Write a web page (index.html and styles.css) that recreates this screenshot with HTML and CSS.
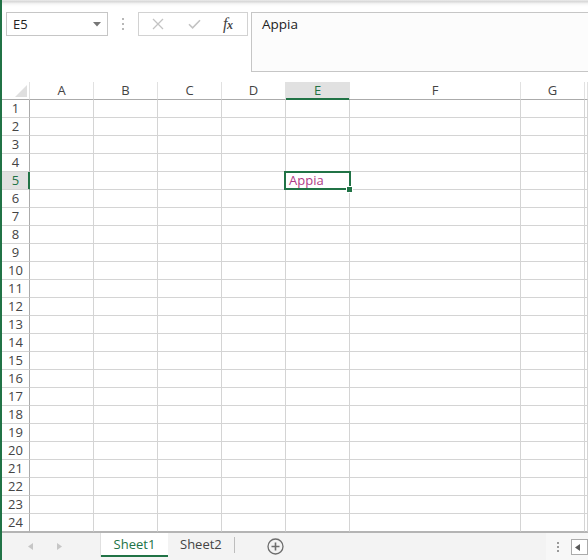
FILE: index.html
```html
<!DOCTYPE html>
<html>
<head>
<meta charset="utf-8">
<link rel="stylesheet" href="styles.css">
</head>
<body>
<div class="app">
  <div class="toolbar">
    <div class="namebox">
      <span class="nb-text">E5</span>
      <svg class="caret" width="8" height="5" viewBox="0 0 8 5"><path d="M0 0H8L4 4.5Z" fill="#767676"/></svg>
    </div>
    <div class="vdots"><i></i><i></i><i></i></div>
    <div class="fxbox">
      <svg class="ic-x" width="12" height="12" viewBox="0 0 12 12"><path d="M1 1L11 11M11 1L1 11" stroke="#c3c3c3" stroke-width="1.3" fill="none"/></svg>
      <svg class="ic-ok" width="13" height="10" viewBox="0 0 13 10"><path d="M1 5.2L4.6 8.8L12 1.2" stroke="#c3c3c3" stroke-width="1.6" fill="none"/></svg>
      <span class="fx">f<span class="fx-x">x</span></span>
    </div>
    <div class="formula">Appia</div>
  </div>

  <div class="sheet">
    <div class="row hdr">
      <div class="corner"><svg width="12" height="12" viewBox="0 0 12 12"><path d="M12 0V12H0Z" fill="#dfdfdf"/></svg></div>
      <div class="ch">A</div><div class="ch">B</div><div class="ch">C</div><div class="ch">D</div><div class="ch sel">E</div><div class="ch">F</div><div class="ch">G</div><div class="ch"></div>
    </div>
    <div class="row"><div class="rh">1</div><div class="c"></div><div class="c"></div><div class="c"></div><div class="c"></div><div class="c"></div><div class="c"></div><div class="c"></div><div class="c"></div></div>
    <div class="row"><div class="rh">2</div><div class="c"></div><div class="c"></div><div class="c"></div><div class="c"></div><div class="c"></div><div class="c"></div><div class="c"></div><div class="c"></div></div>
    <div class="row"><div class="rh">3</div><div class="c"></div><div class="c"></div><div class="c"></div><div class="c"></div><div class="c"></div><div class="c"></div><div class="c"></div><div class="c"></div></div>
    <div class="row"><div class="rh">4</div><div class="c"></div><div class="c"></div><div class="c"></div><div class="c"></div><div class="c"></div><div class="c"></div><div class="c"></div><div class="c"></div></div>
    <div class="row"><div class="rh sel">5</div><div class="c"></div><div class="c"></div><div class="c"></div><div class="c"></div><div class="c val">Appia</div><div class="c"></div><div class="c"></div><div class="c"></div></div>
    <div class="row"><div class="rh">6</div><div class="c"></div><div class="c"></div><div class="c"></div><div class="c"></div><div class="c"></div><div class="c"></div><div class="c"></div><div class="c"></div></div>
    <div class="row"><div class="rh">7</div><div class="c"></div><div class="c"></div><div class="c"></div><div class="c"></div><div class="c"></div><div class="c"></div><div class="c"></div><div class="c"></div></div>
    <div class="row"><div class="rh">8</div><div class="c"></div><div class="c"></div><div class="c"></div><div class="c"></div><div class="c"></div><div class="c"></div><div class="c"></div><div class="c"></div></div>
    <div class="row"><div class="rh">9</div><div class="c"></div><div class="c"></div><div class="c"></div><div class="c"></div><div class="c"></div><div class="c"></div><div class="c"></div><div class="c"></div></div>
    <div class="row"><div class="rh">10</div><div class="c"></div><div class="c"></div><div class="c"></div><div class="c"></div><div class="c"></div><div class="c"></div><div class="c"></div><div class="c"></div></div>
    <div class="row"><div class="rh">11</div><div class="c"></div><div class="c"></div><div class="c"></div><div class="c"></div><div class="c"></div><div class="c"></div><div class="c"></div><div class="c"></div></div>
    <div class="row"><div class="rh">12</div><div class="c"></div><div class="c"></div><div class="c"></div><div class="c"></div><div class="c"></div><div class="c"></div><div class="c"></div><div class="c"></div></div>
    <div class="row"><div class="rh">13</div><div class="c"></div><div class="c"></div><div class="c"></div><div class="c"></div><div class="c"></div><div class="c"></div><div class="c"></div><div class="c"></div></div>
    <div class="row"><div class="rh">14</div><div class="c"></div><div class="c"></div><div class="c"></div><div class="c"></div><div class="c"></div><div class="c"></div><div class="c"></div><div class="c"></div></div>
    <div class="row"><div class="rh">15</div><div class="c"></div><div class="c"></div><div class="c"></div><div class="c"></div><div class="c"></div><div class="c"></div><div class="c"></div><div class="c"></div></div>
    <div class="row"><div class="rh">16</div><div class="c"></div><div class="c"></div><div class="c"></div><div class="c"></div><div class="c"></div><div class="c"></div><div class="c"></div><div class="c"></div></div>
    <div class="row"><div class="rh">17</div><div class="c"></div><div class="c"></div><div class="c"></div><div class="c"></div><div class="c"></div><div class="c"></div><div class="c"></div><div class="c"></div></div>
    <div class="row"><div class="rh">18</div><div class="c"></div><div class="c"></div><div class="c"></div><div class="c"></div><div class="c"></div><div class="c"></div><div class="c"></div><div class="c"></div></div>
    <div class="row"><div class="rh">19</div><div class="c"></div><div class="c"></div><div class="c"></div><div class="c"></div><div class="c"></div><div class="c"></div><div class="c"></div><div class="c"></div></div>
    <div class="row"><div class="rh">20</div><div class="c"></div><div class="c"></div><div class="c"></div><div class="c"></div><div class="c"></div><div class="c"></div><div class="c"></div><div class="c"></div></div>
    <div class="row"><div class="rh">21</div><div class="c"></div><div class="c"></div><div class="c"></div><div class="c"></div><div class="c"></div><div class="c"></div><div class="c"></div><div class="c"></div></div>
    <div class="row"><div class="rh">22</div><div class="c"></div><div class="c"></div><div class="c"></div><div class="c"></div><div class="c"></div><div class="c"></div><div class="c"></div><div class="c"></div></div>
    <div class="row"><div class="rh">23</div><div class="c"></div><div class="c"></div><div class="c"></div><div class="c"></div><div class="c"></div><div class="c"></div><div class="c"></div><div class="c"></div></div>
    <div class="row last"><div class="rh">24</div><div class="c"></div><div class="c"></div><div class="c"></div><div class="c"></div><div class="c"></div><div class="c"></div><div class="c"></div><div class="c"></div></div>
    <div class="selbox"><span class="handle"></span></div>
  </div>

  <div class="tabbar">
    <div class="nav">
      <svg width="5" height="7" viewBox="0 0 5 7"><path d="M5 0V7L0 3.5Z" fill="#c6c6c6"/></svg>
      <svg width="5" height="7" viewBox="0 0 5 7"><path d="M0 0V7L5 3.5Z" fill="#c6c6c6"/></svg>
    </div>
    <div class="tab active">Sheet1</div>
    <div class="tab">Sheet2</div>
    <div class="tabsep"></div>
    <div class="addsheet">
      <svg width="17" height="17" viewBox="0 0 17 17"><circle cx="8.5" cy="8.5" r="7.5" stroke="#6d6d6d" stroke-width="1.3" fill="none"/><path d="M8.5 4.5V12.5M4.5 8.5H12.5" stroke="#6d6d6d" stroke-width="1.6"/></svg>
    </div>
    <div class="tabright">
      <div class="hdots"><i></i><i></i><i></i></div>
      <div class="scrollbtn"><svg width="5" height="7" viewBox="0 0 5 7"><path d="M5 0V7L0 3.5Z" fill="#5a5a5a"/></svg></div>
    </div>
  </div>
</div>
</body>
</html>
```

FILE: styles.css
```css
* { box-sizing: border-box; }
html, body { margin: 0; padding: 0; }
body {
  width: 588px;
  height: 560px;
  overflow: hidden;
  background: #fff;
  font-family: "Open Sans", "Noto Sans", sans-serif;
  color: #444;
}
.app {
  width: 588px;
  height: 560px;
  border-left: 2px solid #217346;
  display: flex;
  flex-direction: column;
  overflow: hidden;
}

/* toolbar */
.toolbar {
  height: 82px;
  flex: none;
  display: flex;
  align-items: flex-start;
  padding: 12px 0 0 4px;
  background: linear-gradient(to bottom, #f1f1f1 0px, #dadada 1px, #dadada 2px, #efefef 3px, #fbfbfb 5px, #fff 7px);
  white-space: nowrap;
}
.namebox {
  width: 102px;
  height: 24px;
  border: 1px solid #c6c6c6;
  background: #fff;
  display: flex;
  align-items: center;
  justify-content: space-between;
  padding: 0 6px 0 6px;
  flex: none;
}
.nb-text { font-size: 13px; color: #222; line-height: 22px; }
.caret { display: block; }
.vdots {
  width: 30px;
  height: 24px;
  display: flex;
  flex-direction: column;
  align-items: center;
  justify-content: center;
  gap: 3px;
  flex: none;
}
.vdots i { display: block; width: 2px; height: 2px; background: #b8b8b8; }
.fxbox {
  width: 110px;
  height: 24px;
  border: 1px solid #d2d2d2;
  background: #fff;
  display: flex;
  align-items: center;
  padding-left: 13px;
  flex: none;
}
.ic-x { display: block; }
.ic-ok { display: block; margin-left: 24px; }
.fx {
  margin-left: 22px;
  font-family: "Liberation Serif", "DejaVu Serif", serif;
  font-style: italic;
  font-size: 16px;
  color: #444;
  line-height: 20px;
  letter-spacing: -0.5px;
}
.fx-x { font-size: 12px; font-weight: bold; }
.formula {
  margin-left: 3px;
  width: 345px;
  height: 60px;
  flex: none;
  border: 1px solid #c6c6c6;
  background: #fcfcfc;
  font-size: 13.5px;
  color: #222;
  padding: 2px 0 0 10px;
  line-height: 18px;
}

/* sheet */
.sheet {
  position: relative;
  flex: none;
  height: 450px;
}
.row {
  display: grid;
  grid-template-columns: 28px 64px 64px 64px 64px 64px 171px 64px 1fr;
  height: 18px;
}
.row > div {
  border-right: 1px solid #d4d4d4;
  border-bottom: 1px solid #d4d4d4;
  font-size: 13px;
  line-height: 17px;
  white-space: nowrap;
  overflow: hidden;
}
.hdr > div {
  border-right-color: #e1e1e1;
  border-bottom-color: #ababab;
  text-align: center;
  color: #444;
}
.hdr .corner {
  display: flex;
  justify-content: flex-end;
  align-items: flex-end;
  padding: 0 2px 2px 0;
}
.hdr .corner svg { display: block; }
.hdr .sel {
  background: #e1e1e1;
  color: #217346;
  border-bottom-color: #217346;
  box-shadow: inset 0 -1px 0 #217346;
}
.row > .rh {
  text-align: center;
  border-right-color: #ababab;
  color: #444;
}
.row > .rh.sel {
  background: #e1e1e1;
  color: #217346;
  border-right-color: #217346;
  box-shadow: inset -1px 0 0 #217346;
}
.row > .val {
  color: #b03a86;
  padding-left: 3px;
}
.row.last > div { border-bottom-color: #b4b4b4; }
.selbox {
  position: absolute;
  left: 282px;
  top: 89px;
  width: 67px;
  height: 19px;
  border: 2px solid #217346;
}
.handle {
  position: absolute;
  right: -4px;
  bottom: -5px;
  width: 7px;
  height: 7px;
  background: #217346;
  border: 1px solid #fff;
}

/* tab bar */
.tabbar {
  flex: 1;
  background: #f3f3f3;
  border-top: 1px solid #b4b4b4;
  display: flex;
  align-items: flex-start;
  font-size: 13px;
  position: relative;
}
.nav {
  width: 99px;
  height: 27px;
  display: flex;
  align-items: center;
  padding-left: 26px;
  gap: 24px;
  flex: none;
}
.nav svg { display: block; }
.tab {
  height: 24px;
  line-height: 22px;
  padding: 0 12px;
  color: #444;
  flex: none;
}
.tab.active {
  width: 67px;
  text-align: center;
  background: #fff;
  color: #217346;
  border-bottom: 2px solid #217346;
  box-shadow: -1px 0 0 #e0e0e0;
}
.tabsep {
  width: 1px;
  height: 16px;
  background: #bdbdbd;
  margin-top: 4px;
  flex: none;
}
.addsheet {
  margin-left: 32px;
  padding-top: 5px;
  flex: none;
}
.addsheet svg { display: block; }
.tabright {
  margin-left: auto;
  width: 42px;
  height: 27px;
  background: #f7f7f7;
  display: flex;
  align-items: flex-start;
  flex: none;
}
.hdots {
  width: 30px;
  display: flex;
  flex-direction: column;
  align-items: center;
  gap: 2px;
  padding-top: 9px;
}
.hdots i { display: block; width: 2px; height: 2px; background: #9a9a9a; }
.scrollbtn {
  margin-top: 6px;
  width: 20px;
  height: 16px;
  border: 1px solid #ababab;
  background: #fff;
  display: flex;
  align-items: center;
  padding-left: 3px;
}
.scrollbtn svg { display: block; }
```
